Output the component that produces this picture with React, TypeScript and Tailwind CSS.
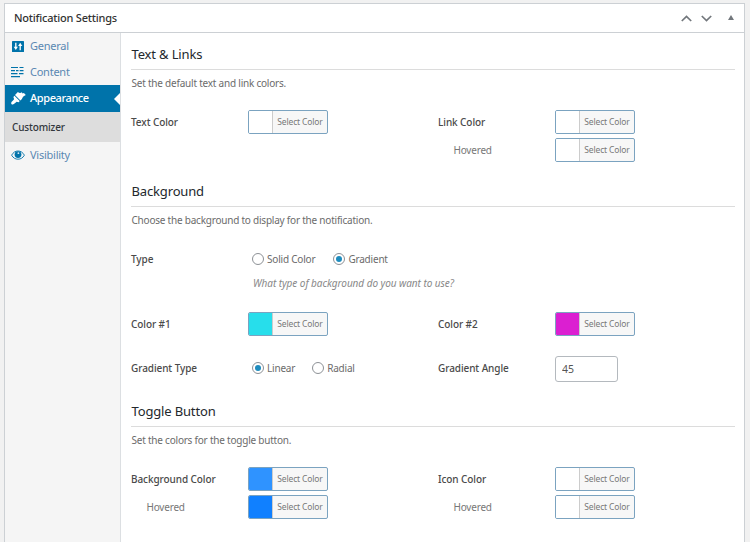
import type { ReactNode } from 'react';

function SlidersIcon() {
  return (
    <svg width="12" height="11" viewBox="0 0 12 11" fill="none">
      <rect width="12" height="11" rx="0.6" fill="#0073aa" />
      <path d="M3.8 1.800v5" stroke="#fff" strokeWidth="1.300" />
      <path d="M1.700 5.700h4.200L3.800 8.900z" fill="#fff" />
      <path d="M8.200 4v5.200" stroke="#fff" strokeWidth="1.300" />
      <path d="M6.100 4.900h4.200L8.200 1.700z" fill="#fff" />
    </svg>
  );
}

function ContentIcon() {
  return (
    <svg width="13" height="12" viewBox="0 0 13 12" fill="none" stroke="#0073aa" strokeWidth="1.200">
      <path d="M0 1.500h7M8.500 1.500h4M0 4.700h4M5 4.700h2.500M8.700 4.700h3.800M0 7.700h6.500M8 7.700h4.500M0 10.700h9" />
    </svg>
  );
}

function BrushIcon() {
  return (
    <svg width="15" height="13" viewBox="0 0 15 13" fill="#fff">
      <path d="M4 3.100L6.900 .1C8.300 1.300 9.600 1.300 10.800 .3l.8 1.200 1.300-.5 1.900 1.900c-1.900.6-3.300 2.200-3.900 4L9.500 8.500z" />
      <path d="M3.400 3.800l5.300 5.300-1 1.200-2.100-.5c-1 .6-2.300 2.600-3.800 2.800C.700 12.700 0 11.900.200 10.800c.3-1.500 2.300-2.500 2.900-3.600L2.400 4.900z" />
    </svg>
  );
}

function EyeIcon() {
  return (
    <svg width="14" height="10" viewBox="0 0 14 10" fill="none">
      <path d="M.6 5.200C2.200 2.300 4.400 1 7 1s4.800 1.300 6.400 4.200C11.800 8 9.600 9.200 7 9.200S2.200 8 .6 5.200z" stroke="#0073aa" strokeWidth="0.900" />
      <circle cx="7" cy="4.600" r="3.400" fill="#0073aa" />
      <circle cx="7.400" cy="3.200" r="0.900" fill="#d5e7f1" />
    </svg>
  );
}

function NavItem({ icon, children }: { icon: ReactNode; children: string }) {
  return (
    <a className="flex h-[26px] items-center pl-[5px] text-[11px] tracking-[-0.25px] text-[#5a88b2]">
      <span className="mr-[5px] flex w-[15px] items-center justify-center">{icon}</span>
      {children}
    </a>
  );
}

function Section({ title, text, height, children }: { title: string; text: string; height: string; children: ReactNode }) {
  return (
    <section className={height}>
      <h2 className="h-[30px] border-b border-[#dcdcdc] pl-[0.500px] text-[13px] leading-[29px] tracking-[-0.15px] text-[#23282d]">{title}</h2>
      <p className="h-[40px] pl-[0.500px] text-[10px] leading-[26px] tracking-[-0.22px] text-[#6b6b6b]">{text}</p>
      {children}
    </section>
  );
}

function Label({ children, sub = false }: { children: string; sub?: boolean }) {
  return (
    <span className={sub ? 'w-[117px] shrink-0 pl-[15.500px] text-[10px] tracking-[-0.2px] text-[#777]' : 'w-[117px] shrink-0 text-[10px] font-medium tracking-[-0.08px] text-[#4a4a4a]'}>
      {children}
    </span>
  );
}

function ColorButton({ swatch }: { swatch: string }) {
  return (
    <button className="flex h-[24px] w-[80px] overflow-hidden rounded-[2px] border border-[#7ba3c0] bg-[#f7f7f7]">
      <span className={`h-full w-[24px] shrink-0 border-r border-[#ccc] ${swatch}`} />
      <span className="flex-1 text-center text-[8.500px] leading-[22px] tracking-[-0.15px] whitespace-nowrap text-[#777]">Select Color</span>
    </button>
  );
}

function Radio({ checked = false, children }: { checked?: boolean; children: string }) {
  return (
    <label className="flex items-center text-[10px] tracking-[-0.2px] text-[#6b6b6b]">
      <span className="mr-[3px] flex size-[12px] items-center justify-center rounded-full border border-[#8d9196] bg-white">
        {checked && <span className="size-[6px] rounded-full bg-[#1e8cbe]" />}
      </span>
      {children}
    </label>
  );
}

function Row({ children }: { children: ReactNode }) {
  return <div className="grid h-[24px] grid-cols-[307px_1fr]">{children}</div>;
}

function Cell({ children }: { children?: ReactNode }) {
  return <div className="flex items-center">{children}</div>;
}

export default function App() {
  return (
    <div className="h-[542px] w-[750px] overflow-hidden bg-[#f1f1f1] pt-[3px] pl-[4px] font-['Noto_Sans','Open_Sans',sans-serif]">
      <div className="flex h-[560px] w-[741px] flex-col border border-[#ccd0d4] bg-white">
        <header className="flex h-[29px] shrink-0 items-center justify-between border-b border-[#ccd0d4] pr-[10px] pl-[9px]">
          <h1 className="text-[11px] font-medium tracking-[-0.22px] text-[#333]">Notification Settings</h1>
          <div className="flex items-center">
            <svg width="11" height="7" viewBox="0 0 11 7" fill="none" stroke="#72777c" strokeWidth="1.700"><path d="M.8 6l4.700-4.600L10.200 6" /></svg>
            <svg className="ml-[9px]" width="11" height="7" viewBox="0 0 11 7" fill="none" stroke="#72777c" strokeWidth="1.700"><path d="M.8 1l4.700 4.600L10.200 1" /></svg>
            <svg className="mb-[1px] ml-[16px]" width="6" height="5" viewBox="0 0 6 5" fill="#72777c"><path d="M3 0l3 5H0z" /></svg>
          </div>
        </header>
        <div className="flex min-h-0 flex-1">
          <nav className="w-[116px] shrink-0 border-r border-[#dcdfe2] bg-[#f5f5f5]">
            <NavItem icon={<SlidersIcon />}>General</NavItem>
            <NavItem icon={<ContentIcon />}>Content</NavItem>
            <a className="flex h-[27px] items-center justify-between bg-[#0073aa] pl-[6px] text-[11px] font-medium tracking-[-0.4px] text-white">
              <span className="flex items-center">
                <span className="mr-[4px] w-[15px]"><BrushIcon /></span>
                Appearance
              </span>
              <svg width="6" height="12" viewBox="0 0 6 12" fill="#fff"><path d="M6 0v12L0 6z" /></svg>
            </a>
            <a className="flex h-[30px] items-center bg-[#ddd] pl-[7px] text-[10px] font-medium tracking-[-0.15px] text-[#32373c]">Customizer</a>
            <NavItem icon={<EyeIcon />}>Visibility</NavItem>
          </nav>
          <main className="flex-1 pt-[7px] pr-[9px] pl-[10px]">
            <Section title="Text &amp; Links" text="Set the default text and link colors." height="h-[137px]">
              <div className="flex flex-col gap-[4px]">
                <Row>
                  <Cell><Label>Text Color</Label><ColorButton swatch="bg-white" /></Cell>
                  <Cell><Label>Link Color</Label><ColorButton swatch="bg-white" /></Cell>
                </Row>
                <Row>
                  <Cell />
                  <Cell><Label sub>Hovered</Label><ColorButton swatch="bg-white" /></Cell>
                </Row>
              </div>
            </Section>
            <Section title="Background" text="Choose the background to display for the notification." height="h-[220px]">
              <Row>
                <Cell>
                  <Label>Type</Label>
                  <div className="flex gap-[18px] pl-[4px]"><Radio>Solid Color</Radio><Radio checked>Gradient</Radio></div>
                </Cell>
              </Row>
              <p className="h-[41px] pl-[122px] text-[10px] leading-[24px] tracking-[-0.05px] text-[#888] italic">What type of background do you want to use?</p>
              <Row>
                <Cell><Label>Color #1</Label><ColorButton swatch="bg-[#27deeb]" /></Cell>
                <Cell><Label>Color #2</Label><ColorButton swatch="bg-[#db1fd1]" /></Cell>
              </Row>
              <div className="mt-[19px]">
                <Row>
                  <Cell>
                    <Label>Gradient Type</Label>
                    <div className="flex gap-[17px] pl-[4px]"><Radio checked>Linear</Radio><Radio>Radial</Radio></div>
                  </Cell>
                  <Cell>
                    <Label>Gradient Angle</Label>
                    <input readOnly value="45" className="relative top-[1px] h-[26px] w-[63px] shrink-0 rounded-[3px] border border-[#b4b9be] bg-white pl-[6px] text-[10.500px] text-[#555]" />
                  </Cell>
                </Row>
              </div>
            </Section>
            <Section title="Toggle Button" text="Set the colors for the toggle button." height="h-[145px]">
              <div className="flex flex-col gap-[4px]">
                <Row>
                  <Cell><Label>Background Color</Label><ColorButton swatch="bg-[#2f93ff]" /></Cell>
                  <Cell><Label>Icon Color</Label><ColorButton swatch="bg-white" /></Cell>
                </Row>
                <Row>
                  <Cell><Label sub>Hovered</Label><ColorButton swatch="bg-[#1080ff]" /></Cell>
                  <Cell><Label sub>Hovered</Label><ColorButton swatch="bg-white" /></Cell>
                </Row>
              </div>
            </Section>
          </main>
        </div>
      </div>
    </div>
  );
}
